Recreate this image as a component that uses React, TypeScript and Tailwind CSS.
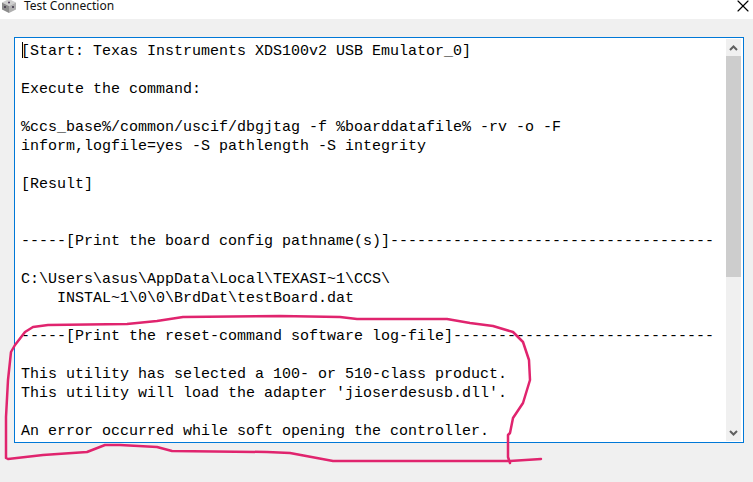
import { useState } from 'react';
import { X } from 'lucide-react';

const LOG = `[Start: Texas Instruments XDS100v2 USB Emulator_0]

Execute the command:

%ccs_base%/common/uscif/dbgjtag -f %boarddatafile% -rv -o -F
inform,logfile=yes -S pathlength -S integrity

[Result]


-----[Print the board config pathname(s)]------------------------------------

C:\\Users\\asus\\AppData\\Local\\TEXASI~1\\CCS\\
    INSTAL~1\\0\\0\\BrdDat\\testBoard.dat

-----[Print the reset-command software log-file]-----------------------------

This utility has selected a 100- or 510-class product.
This utility will load the adapter 'jioserdesusb.dll'.

An error occurred while soft opening the controller.`;

function BoxIcon() {
  return (
    <svg width="16" height="16" viewBox="0 0 16 16" className="shrink-0">
      <path d="M8 1 15 4.5 8 8 1 4.5Z" fill="#cfcfcf" />
      <path d="M1 4.5 8 8V15L1 11.5Z" fill="#8c8c8c" />
      <path d="M15 4.5 8 8V15L15 11.5Z" fill="#b0b0b0" />
      <circle cx="8" cy="4.5" r="1" fill="#4a3a55" />
      <circle cx="4" cy="9" r="1" fill="#3a2f45" />
      <circle cx="12" cy="9" r="1" fill="#3a2f45" />
    </svg>
  );
}

function Annotation() {
  return (
    <svg width="753" height="482" viewBox="0 0 753 482" className="absolute left-0 top-0 pointer-events-none">
      <path
        d="M8 459 L6 458 L6 417 L8 380 L11 352 L15 345 L25 332 L33 327 L48 325 L127 324 L157 321 L183 317 L280 316 L340 317 L357 319 L447 319 L470 323 L493 326 L513 332 L523 342 L529 360 L530 380 L523 403 L513 418 L510 433 L508 435 L508 457 L510 463 L510 461 L541 459 L510 461 L333 461 L290 453 L267 452 L172 451 L157 447 L120 445 L105 445 L87 452 L43 455 L8 459"
        fill="none"
        stroke="#e0246e"
        strokeWidth="2.5"
        strokeLinejoin="round"
        strokeLinecap="round"
      />
    </svg>
  );
}

export default function App() {
  const [log] = useState(LOG);

  return (
    <div className="relative w-[753px] h-[482px] overflow-hidden bg-[#f0f0f0]">
      <div className="flex items-center h-[19px] pb-[7px] bg-white">
        <div className="flex items-center gap-[7px] pl-[1px]">
          <BoxIcon />
          <span className="text-[12px] text-[#111] font-['Noto_Sans',sans-serif] leading-none">Test Connection</span>
        </div>
        <X className="ml-auto w-[20px] h-[20px] text-black" strokeWidth={1.4} />
      </div>

      <div className="mt-[18px] ml-[14px] w-[730px] h-[406px] flex border border-[#0078d7] bg-white">
        <div className="relative flex-1 overflow-hidden pl-[6px] pt-[4px]">
          <div className="absolute left-[7px] top-[4px] w-px h-[16px] bg-black" />
          <pre className="font-['Liberation_Mono',monospace] text-[15px] leading-[19px] text-black">{log}</pre>
        </div>
        <div className="w-[15px] my-[1px] mr-[2px] flex flex-col items-center bg-[#f0f0f0]">
          <div className="h-[17px] flex items-center justify-center">
            <svg width="9" height="6" viewBox="0 0 9 6"><path d="M1 5 4.5 1.5 8 5" fill="none" stroke="#606060" strokeWidth="2" /></svg>
          </div>
          <div className="w-full h-[221px] bg-[#cdcdcd]" />
          <div className="mt-auto h-[17px] flex items-center justify-center">
            <svg width="9" height="6" viewBox="0 0 9 6"><path d="M1 1 4.5 4.5 8 1" fill="none" stroke="#606060" strokeWidth="2" /></svg>
          </div>
        </div>
      </div>

      <Annotation />
    </div>
  );
}
